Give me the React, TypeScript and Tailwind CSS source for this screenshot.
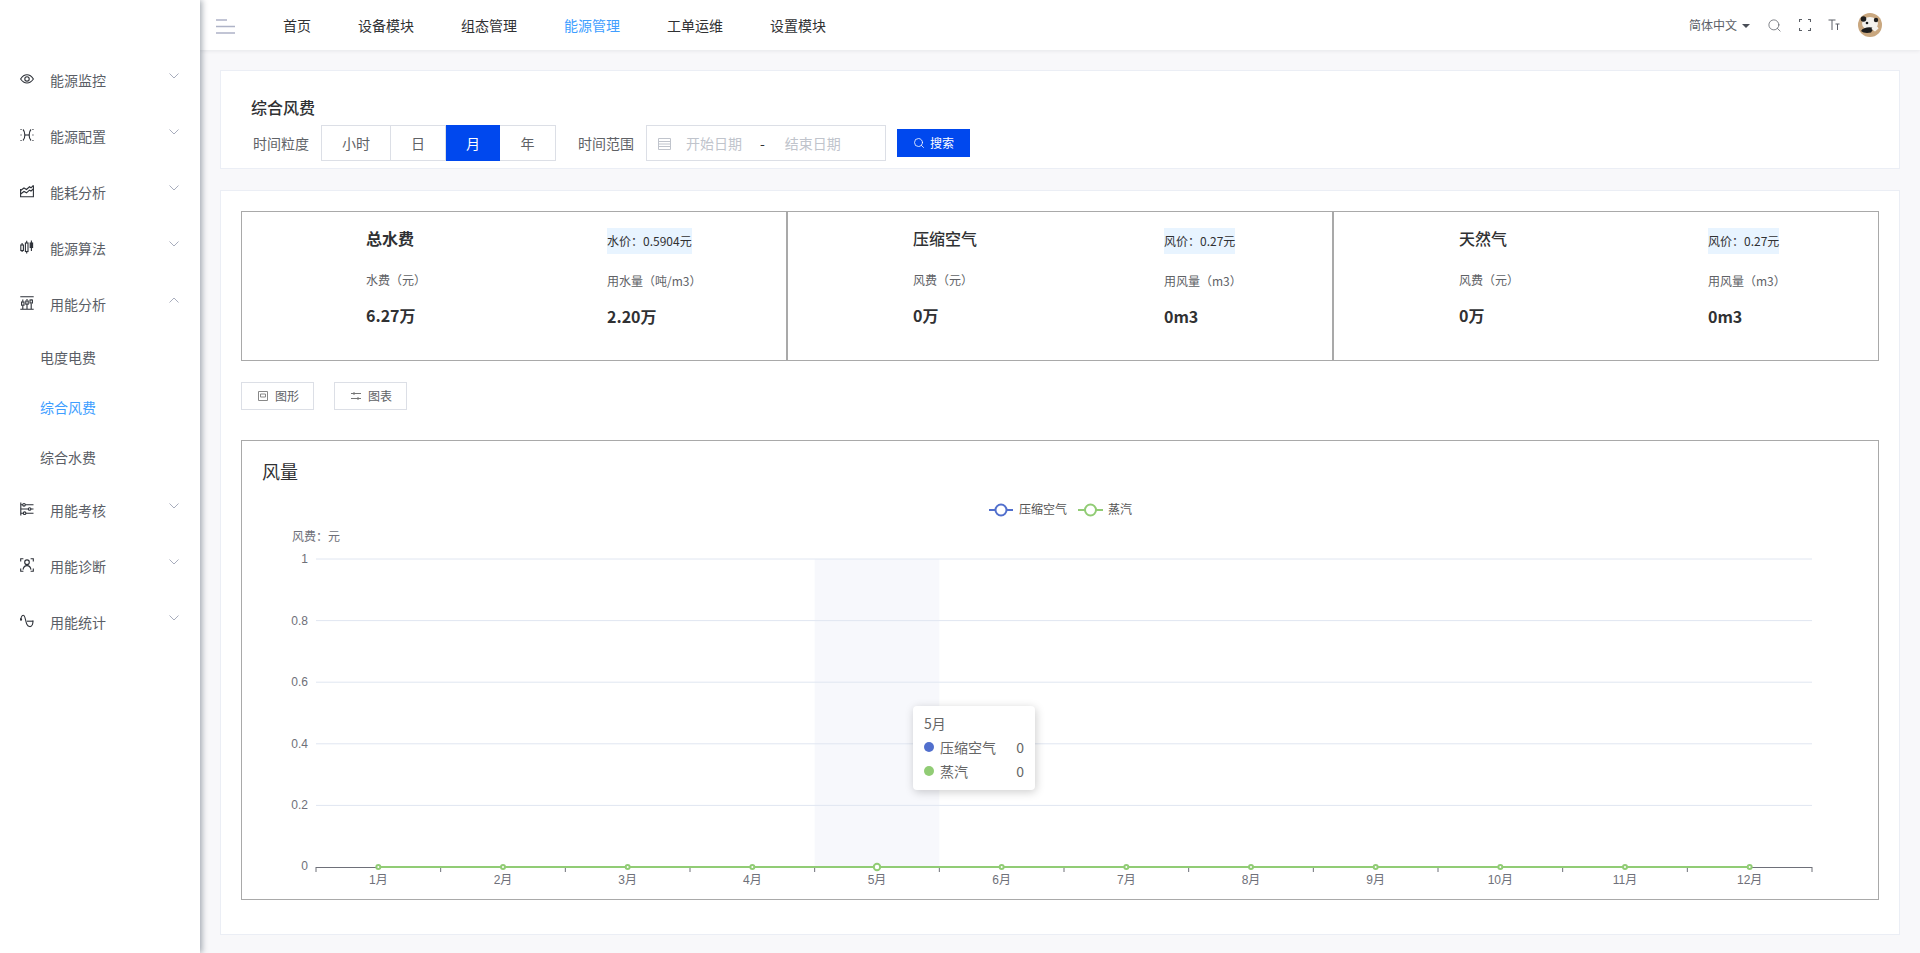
import React from 'react';
import { Search } from 'lucide-react';

const Chevron = ({ up = false }: { up?: boolean }) => (
  <svg width="10" height="6" viewBox="0 0 10 6" fill="none" stroke="#a8adbd" strokeWidth="1" className="mb-[8px] ml-auto shrink-0">
    <path d={up ? 'M0.5 5.5 L5 1 L9.5 5.5' : 'M0.5 0.5 L5 5 L9.5 0.5'} />
  </svg>
);

const iconPaths: Record<string, React.ReactNode> = {
  eye: (
    <>
      <path d="M0.6 7 C2.8 3.6 5 2.8 7 2.8 C9 2.8 11.2 3.6 13.4 7 C11.2 10.2 9 11 7 11 C5 11 2.8 10.2 0.6 7 Z" />
      <circle cx="7" cy="6.9" r="2.2" />
    </>
  ),
  config: (
    <>
      <path d="M3 1.5 C5.5 4 5.5 10 3 12.5" />
      <path d="M11 1.5 C8.5 4 8.5 10 11 12.5" />
      <path d="M4.5 7 H9.5" />
      <path d="M0.5 1.5 H1.6 M0.5 7 H1.6 M0.5 12.5 H1.6 M12.4 1.5 H13.5 M12.4 7 H13.5 M12.4 12.5 H13.5" />
    </>
  ),
  factory: (
    <>
      <path d="M0.6 5 V12.8 H13.4 V1.5" />
      <path d="M0.6 6.5 L4 4 L6.5 5.5 L9.5 2.8 L11 3.8 L13.4 1.5" />
      <path d="M0.6 10 L4 7.5 L6.5 8.8 L9.5 6.2 L11 7 L13.4 5" />
    </>
  ),
  candle: (
    <>
      <rect x="0.8" y="5" width="2.6" height="5.5" />
      <rect x="5.4" y="3" width="2.6" height="8.5" />
      <rect x="10.2" y="3" width="2.4" height="4.5" fill="currentColor" />
      <path d="M2.1 3 V5 M2.1 10.5 V12 M6.7 0.8 V3 M6.7 11.5 V13.5 M11.4 0.5 V3 M11.4 7.5 V11" />
    </>
  ),
  bars: (
    <>
      <path d="M0.3 0.8 H13.7 M0.3 13.2 H13.7" />
      <path d="M2.8 9.6 V13 M2.8 3.4 V5.8 M7 8.6 V13 M7 3 V4.6 M11.2 7.4 V13 M11.2 3 V3.6" />
      <rect x="1.6" y="6" width="2.4" height="3.2" />
      <rect x="5.8" y="5" width="2.4" height="3.2" />
      <rect x="10" y="4" width="2.4" height="3" />
    </>
  ),
  sliders: (
    <>
      <path d="M0.8 0.5 V13.5" />
      <path d="M0.8 2.8 H13.5 M0.8 7 H13.5 M0.8 11.2 H13.5" />
      <circle cx="4" cy="2.8" r="1.3" fill="#fff" />
      <circle cx="9.6" cy="7" r="1.3" fill="#fff" />
      <circle cx="4.6" cy="11.2" r="1.3" fill="#fff" />
    </>
  ),
  person: (
    <>
      <path d="M0.7 3.5 V0.8 H3.4 M10.6 0.8 H13.3 V3.5 M0.7 10.5 V13.2 H3.4 M10.6 13.2 H13.3 V10.5" />
      <circle cx="7" cy="4.2" r="2.3" />
      <path d="M3 11.6 C3.6 8.4 5.2 7.6 7 7.6 C8.8 7.6 10.4 8.4 11 11.6" />
    </>
  ),
  wave: (
    <>
      <path d="M0.8 5 C1.5 1.5 3 0.8 4 1.6 C5.5 3 5.6 8 7 10.5 C8.2 13 11.2 13.5 12.4 10.6 C13 9 13 7.5 13 6.5" />
      <path d="M7 7.2 H13.2" />
      <circle cx="0.9" cy="5.4" r="0.7" />
    </>
  )
};

const MenuIcon = ({ name }: { name: string }) => (
  <svg width="14" height="14" viewBox="0 0 14 14" fill="none" stroke="#2d3138" strokeWidth="1.1" className="mb-[3px] mr-[16px] shrink-0 text-[#2d3138]">
    {iconPaths[name]}
  </svg>
);

const MenuItem = ({ icon, label, up }: { icon: string; label: string; up?: boolean }) => (
  <div className="flex h-[56px] items-center pl-[20px] pr-[21px] text-[14px] text-[#5a5e66]">
    <MenuIcon name={icon} />
    <span>{label}</span>
    <Chevron up={up} />
  </div>
);

const SubItem = ({ label, active }: { label: string; active?: boolean }) => (
  <div className={`flex h-[50px] items-center pl-[40px] text-[14px] ${active ? 'text-[#409eff]' : 'text-[#5a5e66]'}`}>
    {label}
  </div>
);

const Sidebar = () => (
  <aside className="relative z-20 h-full w-[200px] shrink-0 bg-white pt-[52px] shadow-[2px_0_6px_rgba(0,21,41,0.35)]">
    <MenuItem icon="eye" label="能源监控" />
    <MenuItem icon="config" label="能源配置" />
    <MenuItem icon="factory" label="能耗分析" />
    <MenuItem icon="candle" label="能源算法" />
    <MenuItem icon="bars" label="用能分析" up />
    <SubItem label="电度电费" />
    <SubItem label="综合风费" active />
    <SubItem label="综合水费" />
    <MenuItem icon="sliders" label="用能考核" />
    <MenuItem icon="person" label="用能诊断" />
    <MenuItem icon="wave" label="用能统计" />
  </aside>
);

const navItems = ['首页', '设备模块', '组态管理', '能源管理', '工单运维', '设置模块'];

const Header = () => (
  <header className="relative z-10 flex h-[50px] shrink-0 items-center bg-white pl-[16px] pr-[38px] shadow-[0_1px_4px_rgba(0,21,41,0.08)]">
    <svg width="19" height="15" viewBox="0 0 19 15" fill="none" stroke="#aeb3c7" strokeWidth="1.4" className="mr-[48px] mt-[3px]">
      <path d="M0 1 H11 M0 7.5 H19 M0 14 H19" />
    </svg>
    <nav className="flex gap-[47px] text-[14px] text-[#303133]">
      {navItems.map(item => (
        <span key={item} className={item === '能源管理' ? 'text-[#409eff]' : ''}>{item}</span>
      ))}
    </nav>
    <div className="ml-auto flex items-center text-[#5a5e66]">
      <span className="text-[12px]">简体中文</span>
      <span className="ml-[5px] mt-[1px] h-0 w-0 border-x-[4px] border-t-[4px] border-x-transparent border-t-[#4a4e57]" />
      <Search size={15} strokeWidth={1.2} className="ml-[17px]" />
      <svg width="12" height="12" viewBox="0 0 12 12" fill="none" stroke="#5a5e66" strokeWidth="1.1" className="ml-[17px]">
        <path d="M0.5 3 V0.5 H3 M9 0.5 H11.5 V3 M0.5 9 V11.5 H3 M9 11.5 H11.5 V9" />
      </svg>
      <svg width="12" height="12" viewBox="0 0 12 12" fill="none" stroke="#5a5e66" strokeWidth="1" className="ml-[17px]">
        <path d="M0.5 1 H7.5 M4 1 V11 M7.5 5 H11.5 M9.5 5 V11" />
      </svg>
      <svg width="24" height="24" viewBox="0 0 24 24" className="ml-[18px]">
        <circle cx="12" cy="12" r="12" fill="#c9a77f" />
        <ellipse cx="12" cy="10.5" rx="8" ry="6.5" fill="#f4f2ee" />
        <circle cx="5.5" cy="6" r="2.8" fill="#1e1e1e" />
        <circle cx="18" cy="7" r="2.2" fill="#1e1e1e" />
        <circle cx="9" cy="10" r="1.3" fill="#1e1e1e" />
        <path d="M3 18 C5 14.5 11 13.5 16 15 L13 19.5 C9 20.5 5 20 3 18 Z" fill="#1e1e1e" />
        <path d="M15 13 C17.5 12 20 13.5 20.5 15.5 L17 18.5 L13.5 16 Z" fill="#f4f2ee" />
      </svg>
    </div>
  </header>
);

const grains = [
  { label: '小时', w: 'w-[68px]' },
  { label: '日', w: 'w-[55px]' },
  { label: '月', w: 'w-[55px]', active: true },
  { label: '年', w: 'w-[55px]' }
];

const FilterCard = () => (
  <section className="h-[99px] border border-[#ebeef5] bg-white pl-[30px] pt-[24px]">
    <h2 className="h-[24px] text-[16px] font-medium leading-[24px] text-[#303133]">综合风费</h2>
    <div className="mt-[6px] flex items-center text-[14px] text-[#606266]">
      <span className="ml-[2px] mr-[11px] w-[57px]">时间粒度</span>
      <div className="flex h-[36px] border border-[#dcdfe6]">
        {grains.map((g, i) => (
          <div
            key={g.label}
            className={`flex items-center justify-center ${g.w} ${i > 0 && i < 3 ? 'border-l border-[#dcdfe6]' : ''} ${g.active ? '-my-px bg-[#0048ee] text-white' : ''}`}
          >
            {g.label}
          </div>
        ))}
      </div>
      <span className="ml-[22px] mr-[12px] w-[56px]">时间范围</span>
      <div className="flex h-[36px] w-[240px] items-center border border-[#dcdfe6] pl-[11px] text-[#c0c4cc]">
        <svg width="13" height="13" viewBox="0 0 13 13" fill="none" stroke="#c0c4cc" strokeWidth="1">
          <path d="M0.5 1.5 H12.5 V12.5 H0.5 Z M0.5 4.5 H12.5 M0.5 7 H12.5 M0.5 9.5 H12.5" />
        </svg>
        <span className="ml-[15px]">开始日期</span>
        <span className="ml-[18px] text-[#303133]">-</span>
        <span className="ml-[20px]">结束日期</span>
      </div>
      <button className="ml-[11px] flex h-[28px] w-[73px] items-center justify-center gap-[5px] bg-[#0048ee] text-[12px] text-white">
        <Search size={12} strokeWidth={1.6} />
        搜索
      </button>
    </div>
  </section>
);

type Kpi = {
  title: string;
  bold?: boolean;
  price: string;
  label1: string;
  value1: string;
  label2: string;
  value2: string;
  left: string;
  pad: string;
};

const kpis: Kpi[] = [
  { title: '总水费', bold: true, price: '水价：0.5904元', label1: '水费（元）', value1: '6.27万', label2: '用水量（吨/m3）', value2: '2.20万', left: 'w-[241px]', pad: 'pl-[124px]' },
  { title: '压缩空气', price: '风价：0.27元', label1: '风费（元）', value1: '0万', label2: '用风量（m3）', value2: '0m3', left: 'w-[251px]', pad: 'pl-[125px]' },
  { title: '天然气', price: '风价：0.27元', label1: '风费（元）', value1: '0万', label2: '用风量（m3）', value2: '0m3', left: 'w-[249px]', pad: 'pl-[125px]' }
];

const KpiCell = ({ kpi }: { kpi: Kpi }) => (
  <div className={`flex h-[150px] w-[546px] border border-[#a9a9a9] ${kpi.pad}`}>
    <div className={`${kpi.left} shrink-0 pt-[14px]`}>
      <div className={`h-[24px] text-[16px] leading-[24px] text-[#303133] ${kpi.bold ? 'font-semibold' : 'font-medium'}`}>{kpi.title}</div>
      <div className="mt-[20px] h-[20px] text-[12px] leading-[20px] text-[#606266]">{kpi.label1}</div>
      <div className="mt-[13px] h-[24px] text-[16px] font-semibold leading-[24px] text-[#303133]">{kpi.value1}</div>
    </div>
    <div className="pt-[16px]">
      <div className="flex h-[26px] w-fit items-center bg-[#e8f4ff] text-[12px] text-[#303133]">{kpi.price}</div>
      <div className="mt-[17px] h-[20px] text-[12px] leading-[20px] text-[#606266]">{kpi.label2}</div>
      <div className="mt-[13px] h-[24px] text-[16px] font-semibold leading-[24px] text-[#303133]">{kpi.value2}</div>
    </div>
  </div>
);

const months = ['1月', '2月', '3月', '4月', '5月', '6月', '7月', '8月', '9月', '10月', '11月', '12月'];
const yTicks = [
  { v: '1', y: 559 },
  { v: '0.8', y: 620.6 },
  { v: '0.6', y: 682.2 },
  { v: '0.4', y: 743.8 },
  { v: '0.2', y: 805.4 }
];
const plotLeft = 316;
const plotRight = 1812;
const step = (plotRight - plotLeft) / 12;
const chartFont = { fontFamily: '"Liberation Sans", "Noto Sans CJK SC", sans-serif' };

const Chart = () => (
  <svg width="1636" height="408" viewBox="242 490 1636 408" style={chartFont} className="block">
    <rect x={plotLeft + 4 * step} y="559" width={step} height="308" fill="#f7f8fc" />

    <line x1="989" x2="1013" y1="510" y2="510" stroke="#516fcd" strokeWidth="2" />
    <circle cx="1001" cy="510" r="5.5" fill="#fff" stroke="#516fcd" strokeWidth="2" />
    <text x="1019" y="514" fontSize="12" fill="#555">压缩空气</text>
    <line x1="1078" x2="1103" y1="510" y2="510" stroke="#91cc75" strokeWidth="2" />
    <circle cx="1090.5" cy="510" r="5.5" fill="#fff" stroke="#91cc75" strokeWidth="2" />
    <text x="1108" y="514" fontSize="12" fill="#555">蒸汽</text>

    <text x="292" y="541" fontSize="12" fill="#6e7079">风费：元</text>
    {yTicks.map(t => (
      <g key={t.v}>
        <line x1={plotLeft} x2={plotRight} y1={t.y} y2={t.y} stroke="#e0e6f1" />
        <text x="308" y={t.y + 4} fontSize="12" fill="#6e7079" textAnchor="end">{t.v}</text>
      </g>
    ))}
    <text x="308" y="870" fontSize="12" fill="#6e7079" textAnchor="end">0</text>

    <line x1={plotLeft} x2={plotRight} y1="867.5" y2="867.5" stroke="#6e7079" />
    {Array.from({ length: 13 }, (_, i) => (
      <line key={i} x1={plotLeft + i * step} x2={plotLeft + i * step} y1="867" y2="872" stroke="#6e7079" />
    ))}
    {months.map((m, i) => (
      <text key={m} x={plotLeft + (i + 0.5) * step} y="884" fontSize="12" fill="#6e7079" textAnchor="middle">{m}</text>
    ))}

    <line x1={plotLeft + step / 2} x2={plotRight - step / 2} y1="867" y2="867" stroke="#91cc75" strokeWidth="2" />
    {months.map((m, i) => (
      <circle
        key={m}
        cx={plotLeft + (i + 0.5) * step}
        cy="867"
        r={i === 4 ? 3.2 : 2}
        fill="#fff"
        stroke="#91cc75"
        strokeWidth="2"
      />
    ))}
  </svg>
);

const ChartTooltip = () => (
  <div className="absolute left-[671px] top-[265px] h-[84px] w-[122px] rounded-[4px] bg-white px-[11px] pt-[7px] text-[14px] leading-[24px] text-[#666] shadow-[1px_2px_10px_rgba(0,0,0,0.2)]">
    <div className="h-[22px] leading-[20px]">5月</div>
    <div className="flex items-center">
      <span className="mr-[6px] h-[10px] w-[10px] rounded-full bg-[#516fcd]" />
      <span>压缩空气</span>
      <span className="ml-auto">0</span>
    </div>
    <div className="flex items-center">
      <span className="mr-[6px] h-[10px] w-[10px] rounded-full bg-[#91cc75]" />
      <span>蒸汽</span>
      <span className="ml-auto">0</span>
    </div>
  </div>
);

const App = () => (
  <div className="flex h-[953px] w-[1920px] overflow-hidden bg-[#f8f8fa] font-['Noto_Sans_CJK_SC',sans-serif]">
    <Sidebar />
    <div className="flex min-w-0 flex-1 flex-col">
      <Header />
      <main className="flex-1 px-[20px] pt-[20px]">
        <FilterCard />
        <section className="mt-[21px] h-[745px] border border-[#ebeef5] bg-white p-[20px]">
          <div className="flex">
            {kpis.map(k => <KpiCell key={k.title} kpi={k} />)}
          </div>
          <div className="mt-[21px] flex gap-[20px] text-[12px] text-[#606266]">
            <button className="flex h-[28px] w-[73px] items-center border border-[#dcdfe6] pl-[16px]">
              <svg width="10" height="10" viewBox="0 0 10 10" fill="none" stroke="#888" strokeWidth="1" className="mr-[7px]">
                <path d="M0.5 0.5 H9.5 V9.5 H0.5 Z M2.5 3 H7.5 V6 H2.5 Z" />
              </svg>
              图形
            </button>
            <button className="flex h-[28px] w-[73px] items-center border border-[#dcdfe6] pl-[16px]">
              <svg width="10" height="10" viewBox="0 0 10 10" fill="none" stroke="#777" strokeWidth="1" className="mr-[7px]">
                <path d="M0 2.5 H10 M0 7.5 H10 M3 1 V4 M7 6 V9" />
              </svg>
              图表
            </button>
          </div>
          <div className="relative mt-[30px] h-[460px] border border-[#a9a9a9] bg-white">
            <h3 className="h-[49px] pl-[20px] pt-[17px] text-[18px] leading-[27px] text-[#303133]">风量</h3>
            <Chart />
            <ChartTooltip />
          </div>
        </section>
      </main>
    </div>
  </div>
);

export default App;
